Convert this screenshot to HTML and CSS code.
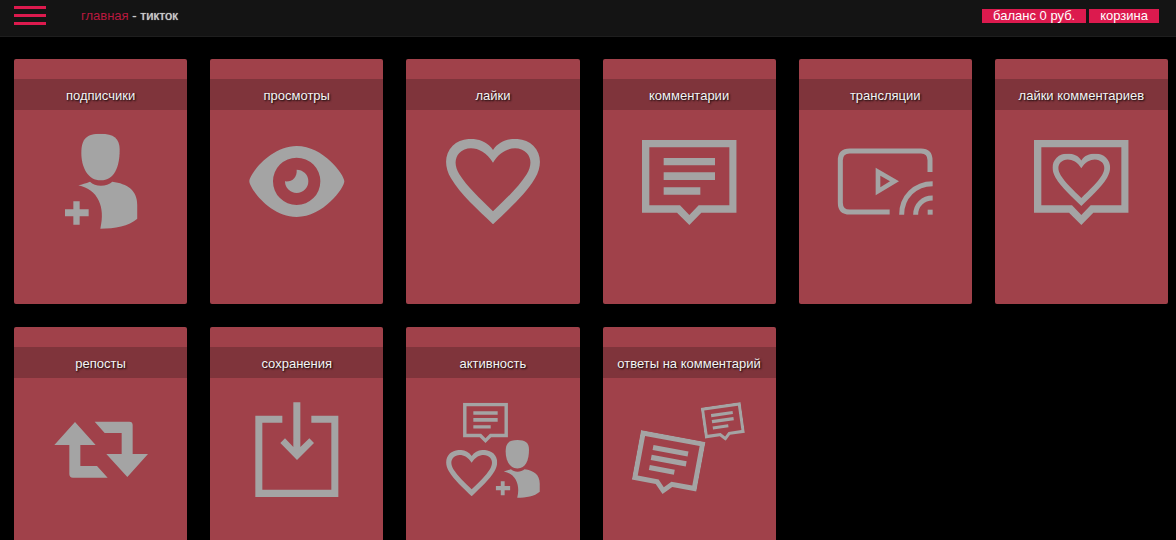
FILE: index.html
```html
<!DOCTYPE html>
<html lang="ru">
<head>
    <meta charset="UTF-8">
    <meta name="viewport" content="width=device-width, initial-scale=1.0">
    <title>тикток</title>
    <link rel="stylesheet" href="styles.css">
</head>
<body>
    <svg class="symbols" aria-hidden="true">
        <symbol id="heart" viewBox="0 0 282 256">
            <path fill-rule="evenodd" d="M141 256C94 210 44 167 15 118C-6 82-5 45 20 20C50-9 114-9 141 33C168-9 232-9 262 20C287 45 288 82 267 118C238 167 188 210 141 256ZM141 217C180 179 219 143 242 106C257 81 257 58 242 42C219 18 170 23 141 71C112 23 63 18 40 42C25 58 25 81 40 106C63 143 102 179 141 217Z"/>
        </symbol>
        <symbol id="bubble" viewBox="0 0 284 255">
            <path fill-rule="evenodd" d="M0 0H284V218H178L142 255L105 218H0ZM22 22V196H114L142 225L170 196H262V22Z"/>
        </symbol>
        <symbol id="comment" viewBox="0 0 284 255">
            <use href="#bubble" width="284" height="255"/>
            <path d="M65 54H219V76H65ZM65 97H219V120H65ZM65 142H175V164H65Z"/>
        </symbol>
        <symbol id="follower" viewBox="0 0 218 286">
            <path d="M107 0C146 0 164 14 164 48C164 99 148 140 107 140C69 140 49 102 49 57C49 15 65 0 107 0Z"/>
            <path d="M40 155C51 152 62 149 75 144C90 160 125 160 142 144C187 150 217 169 217 215V255C191 278 150 284 106 285C122 221 99 167 40 155Z"/>
            <path d="M25 203H44V227H71V248H44V273H25V248H0V227H25Z"/>
        </symbol>
    </svg>

    <header class="header">
        <button class="menu" type="button" aria-label="меню">
            <span></span><span></span><span></span>
        </button>
        <nav class="crumbs"><a href="#">главная</a> - тикток</nav>
        <div class="account">
            <a class="pill" href="#">баланс 0 руб.</a>
            <a class="pill" href="#">корзина</a>
        </div>
    </header>

    <main class="cards">
        <a class="card" href="#">
            <span class="card-title">подписчики</span>
            <svg class="icon" viewBox="2 0 360 360">
                <use href="#follower" x="74" y="41" width="218" height="286"/>
            </svg>
        </a>
        <a class="card" href="#">
            <span class="card-title">просмотры</span>
            <svg class="icon" viewBox="2 0 360 360">
                <path fill-rule="evenodd" d="M39 184C39 164 101 78 181 78C261 78 324 164 324 184C324 204 261 291 181 291C101 291 39 204 39 184ZM181 113A71 71 0 1 0 181 255A71 71 0 1 0 181 113Z"/>
                <path d="M181 149A35 35 0 1 1 146 184C168 186 183 172 181 149Z"/>
            </svg>
        </a>
        <a class="card" href="#">
            <span class="card-title">лайки</span>
            <svg class="icon" viewBox="3 0 360 360">
                <use href="#heart" x="42" y="57" width="282" height="256"/>
            </svg>
        </a>
        <a class="card" href="#">
            <span class="card-title">комментарии</span>
            <svg class="icon" viewBox="3 0 360 360">
                <use href="#comment" x="42" y="60" width="284" height="255"/>
            </svg>
        </a>
        <a class="card" href="#">
            <span class="card-title">трансляции</span>
            <svg class="icon" viewBox="4 0 360 360">
                <path class="line" d="M198 276H78Q50 276 50 248V121Q50 93 78 93H292Q319 93 319 121V156"/>
                <path fill-rule="evenodd" d="M156 143L226 184L156 226ZM170 167V202L199 184Z"/>
                <path class="line" d="M234 284C234 231 274 191 327 191M276 284C276 255 298 234 327 234"/>
                <path d="M312 269H327V284H312Z"/>
            </svg>
        </a>
        <a class="card" href="#">
            <span class="card-title">лайки комментариев</span>
            <svg class="icon" viewBox="4 0 360 360">
                <use href="#bubble" x="43" y="60" width="284" height="255"/>
                <use href="#heart" x="98" y="101" width="174" height="157"/>
            </svg>
        </a>
        <a class="card" href="#">
            <span class="card-title">репосты</span>
            <svg class="icon" viewBox="2 -6 360 360">
                <path d="M42 165L104 96L166 165H120V228H170L202 263H98Q87 263 87 252V165Z"/>
                <path d="M163 95H267Q277 95 277 105V192H323L261 261L198 192H244V129H193Z"/>
            </svg>
        </a>
        <a class="card" href="#">
            <span class="card-title">сохранения</span>
            <svg class="icon" viewBox="2 -6 360 360">
                <path d="M138 77V98H78V299H285V98H225V77H306V321H57V77Z"/>
                <path d="M171 37H192V171L219 145L233 159L182 210L132 159L146 145L171 171Z"/>
            </svg>
        </a>
        <a class="card" href="#">
            <span class="card-title">активность</span>
            <svg class="icon" viewBox="3 -6 360 360">
                <use href="#comment" x="93" y="38" width="135" height="121"/>
                <use href="#heart" x="42" y="180" width="154" height="139"/>
                <use href="#follower" x="191" y="150" width="133" height="174"/>
            </svg>
        </a>
        <a class="card" href="#">
            <span class="card-title">ответы на комментарий</span>
            <svg class="icon" viewBox="27 -6 360 360">
                <use href="#comment" width="197" height="177" transform="translate(63 120) rotate(10.5)"/>
                <use href="#comment" width="121" height="109" transform="translate(242 53) rotate(-8)"/>
            </svg>
        </a>
    </main>
</body>
</html>
```

FILE: styles.css
```css
body {
    margin: 0;
    background: #000;
    font-family: "Liberation Sans", Arial, sans-serif;
    font-size: 13px;
    color: #ccc;
}
a {
    color: #dc1a4e;
    text-decoration: none;
}
.symbols {
    display: none;
}
.header {
    display: flex;
    align-items: flex-start;
    height: 36px;
    padding: 0 17px 0 14px;
    background: #141414;
    border-bottom: 1px solid #1e1e1e;
}
.menu {
    display: flex;
    flex-direction: column;
    gap: 5px;
    width: 32px;
    margin: 6px 35px 0 0;
    padding: 0;
    border: 0;
    background: none;
    cursor: pointer;
}
.menu span {
    width: 100%;
    height: 3px;
    background: #dc1a4e;
}
.crumbs {
    padding-top: 8px;
    line-height: 16px;
    text-shadow: 0 0 1px #ccc;
}
.crumbs a {
    color: #b8193f;
    text-shadow: none;
}
.account {
    display: flex;
    gap: 3px;
    margin-left: auto;
    padding-top: 9px;
}
.pill {
    padding: 0 11px;
    line-height: 14px;
    background: #dc1a4e;
    color: #fff;
}
.cards {
    display: grid;
    grid-template-columns: repeat(6, 1fr);
    gap: 23px;
    padding: 22px 8px 22px 14px;
}
.card {
    display: flex;
    flex-direction: column;
    align-items: center;
    padding: 20px 0 64px;
    border-radius: 2px;
    background: #a0414a;
}
.card-title {
    align-self: stretch;
    margin-bottom: 10px;
    padding-top: 2px;
    line-height: 29px;
    text-align: center;
    background: #7f343b;
    color: #f4f4f4;
    text-shadow: 1px 1px 2px #000;
}
.icon {
    width: 120px;
    height: 120px;
    fill: #a4a4a4;
}
.line {
    fill: none;
    stroke: #a4a4a4;
    stroke-width: 15;
}
```
